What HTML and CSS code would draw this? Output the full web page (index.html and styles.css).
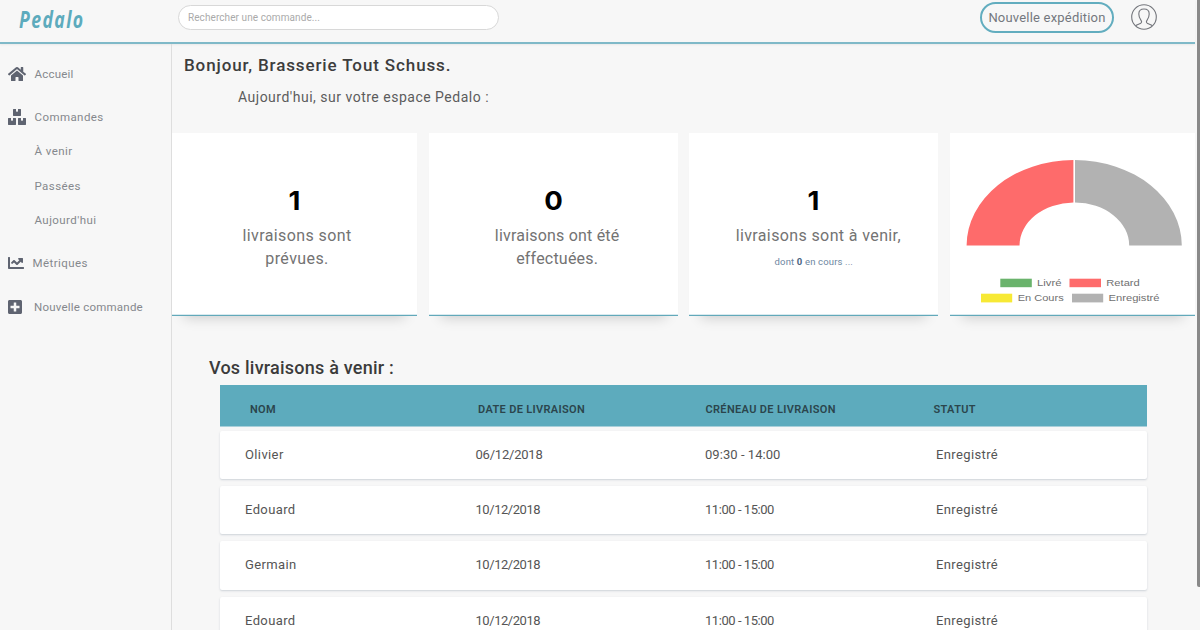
FILE: index.html
```html
<!DOCTYPE html>
<html lang="fr">
<head>
<meta charset="utf-8">
<title>Pedalo</title>
<link rel="stylesheet" href="styles.css">
</head>
<body>
<div class="app">
  <header class="topbar">
    <a class="logo">Pedalo</a>
    <div class="search"><span class="search-text">Rechercher une commande...</span></div>
    <a class="ship-btn"><span class="ship-text">Nouvelle expédition</span></a>
    <svg class="avatar" viewBox="0 0 26 26"><circle cx="13" cy="13" r="12.3"/><path d="M4.6 21.8C5.8 20.6 7.6 20.3 9.4 19.4C11 18.6 10.8 17.6 10 16.4C8.6 14.4 7.8 12.6 7.8 10C7.8 6.6 9.8 5 13 5S18.200 6.600 18.200 10C18.200 12.600 17.400 14.400 16 16.400C15.200 17.600 15 18.600 16.600 19.400C18.400 20.300 20.200 20.600 21.400 21.800"/></svg>
  </header>
  <div class="body">
    <nav class="side">
      <a class="item home"><svg class="ico wide" viewBox="0 0 576 512"><path d="M280.370 148.260L96 300.110V464a16 16 0 0 0 16 16l112.060-.290a16 16 0 0 0 15.920-16V368a16 16 0 0 1 16-16h64a16 16 0 0 1 16 16v95.640a16 16 0 0 0 16 16.050L464 480a16 16 0 0 0 16-16V300L295.670 148.260a12.190 12.190 0 0 0-15.300 0zM571.600 251.470L488 182.560V44.050a12 12 0 0 0-12-12h-56a12 12 0 0 0-12 12v72.610L318.470 43a48 48 0 0 0-61 0L4.340 251.470a12 12 0 0 0-1.600 16.900l25.500 31A12 12 0 0 0 45.150 301l235.220-193.740a12.190 12.190 0 0 1 15.300 0L530.900 301a12 12 0 0 0 16.900-1.600l25.500-31a12 12 0 0 0-1.700-16.930z"/></svg><span>Accueil</span></a>
      <a class="item"><svg class="ico wide" viewBox="0 0 576 512"><path d="M560 288h-80v96l-32-21.300-32 21.300v-96h-80c-8.800 0-16 7.200-16 16v192c0 8.800 7.200 16 16 16h224c8.800 0 16-7.200 16-16V304c0-8.800-7.200-16-16-16zm-384-64h224c8.800 0 16-7.200 16-16V16c0-8.800-7.200-16-16-16h-80v96l-32-21.300L256 96V0h-80c-8.800 0-16 7.200-16 16v192c0 8.800 7.200 16 16 16zm64 64h-80v96l-32-21.300L96 384v-96H16c-8.800 0-16 7.200-16 16v192c0 8.800 7.200 16 16 16h224c8.800 0 16-7.200 16-16V304c0-8.800-7.200-16-16-16z"/></svg><span>Commandes</span></a>
      <div class="subs">
        <a class="item sub">À venir</a>
        <a class="item sub">Passées</a>
        <a class="item sub">Aujourd'hui</a>
      </div>
      <a class="item"><svg class="ico mid" viewBox="0 0 512 512"><path d="M496 384H64V80c0-8.840-7.160-16-16-16H16C7.160 64 0 71.160 0 80v336c0 17.670 14.330 32 32 32h464c8.840 0 16-7.160 16-16v-32c0-8.840-7.160-16-16-16zM464 96H345.940c-21.380 0-32.090 25.850-16.970 40.970l32.400 32.400L288 242.750l-73.370-73.370c-12.500-12.500-32.760-12.500-45.250 0l-68.690 68.690c-6.250 6.250-6.250 16.380 0 22.630l22.620 22.620c6.250 6.250 16.380 6.250 22.630 0L192 237.250l73.370 73.370c12.500 12.500 32.760 12.500 45.250 0l96-96 32.400 32.400c15.120 15.120 40.970 4.410 40.970-16.970V112c.010-8.840-7.150-16-15.990-16z"/></svg><span>Métriques</span></a>
      <a class="item new"><svg class="ico slim" viewBox="0 0 448 512"><path d="M400 32H48C21.500 32 0 53.500 0 80v352c0 26.500 21.500 48 48 48h352c26.500 0 48-21.500 48-48V80c0-26.500-21.500-48-48-48zm-32 252c0 6.600-5.400 12-12 12h-92v92c0 6.600-5.400 12-12 12h-56c-6.600 0-12-5.400-12-12v-92H92c-6.600 0-12-5.400-12-12v-56c0-6.600 5.400-12 12-12h92v-92c0-6.600 5.400-12 12-12h56c6.600 0 12 5.400 12 12v92h92c6.600 0 12 5.400 12 12v56z"/></svg><span>Nouvelle commande</span></a>
    </nav>
    <main class="main">
      <h1 class="hello">Bonjour, Brasserie Tout Schuss.</h1>
      <p class="intro">Aujourd'hui, sur votre espace Pedalo :</p>
      <section class="cards">
        <div class="card"><b class="num">1</b><p class="label">livraisons sont<br>prévues.</p></div>
        <div class="card"><b class="num">0</b><p class="label">livraisons ont été<br>effectuées.</p></div>
        <div class="card"><b class="num">1</b><p class="label">livraisons sont à venir,</p><p class="note">dont <b>0</b> en cours ...</p></div>
        <div class="card">
          <svg class="chart" viewBox="0 0 245 181">
            <path fill="#fe6b6b" d="M16.600 112.500A107.500 85.500 0 0 1 123.400 27V69.500A54.500 43 0 0 0 69.500 112.500Z"/>
            <path fill="#b2b2b2" d="M231.800 112.500A107.500 85.500 0 0 0 125 27V69.500A54.500 43 0 0 1 179.200 112.500Z"/>
            <rect x="50.300" y="145.700" width="31.500" height="8.500" fill="#6ab36c"/>
            <rect x="119.500" y="145.700" width="31.500" height="8.500" fill="#fe6b6b"/>
            <rect x="31" y="160.700" width="31.200" height="8.700" fill="#f7e935"/>
            <rect x="122" y="160.700" width="31.200" height="8.700" fill="#b2b2b2"/>
            <g class="legend">
              <text x="87" y="152.700" textLength="24.500" lengthAdjust="spacingAndGlyphs">Livré</text>
              <text x="156.300" y="152.700" textLength="33.500" lengthAdjust="spacingAndGlyphs">Retard</text>
              <text x="67.700" y="167.700" textLength="46" lengthAdjust="spacingAndGlyphs">En Cours</text>
              <text x="158.500" y="167.700" textLength="51" lengthAdjust="spacingAndGlyphs">Enregistré</text>
            </g>
          </svg>
        </div>
      </section>
      <h2 class="title">Vos livraisons à venir :</h2>
      <section class="table">
        <div class="head"><span>NOM</span><span>DATE DE LIVRAISON</span><span>CRÉNEAU DE LIVRAISON</span><span>STATUT</span></div>
        <div class="row"><span>Olivier</span><span class="date">06/12/2018</span><span class="slot">09:30 - 14:00</span><span>Enregistré</span></div>
        <div class="row"><span>Edouard</span><span class="date narrow">10/12/2018</span><span class="slot early">11:00 - 15:00</span><span>Enregistré</span></div>
        <div class="row"><span>Germain</span><span class="date narrow">10/12/2018</span><span class="slot early">11:00 - 15:00</span><span>Enregistré</span></div>
        <div class="row"><span>Edouard</span><span class="date narrow">10/12/2018</span><span class="slot early">11:00 - 15:00</span><span>Enregistré</span></div>
      </section>
    </main>
  </div>
  <div class="scroll-thumb"></div>
</div>
</body>
</html>
```
FILE: styles.css
```css
* { box-sizing: border-box; }
body { margin: 0; background: #f7f7f7; font-family: Roboto, "Liberation Sans", sans-serif; overflow: hidden; }
h1, h2, p { margin: 0; }
.app { position: relative; width: 1200px; height: 630px; padding-right: 5px; overflow: hidden; }
.scroll-thumb { position: absolute; top: 0; right: 0; width: 3px; height: 587px; background: #898989; border-radius: 0 0 0 2px; }

.topbar { display: flex; height: 44px; border-bottom: 2px solid #7fb9c8; box-shadow: 0 1px 2px rgba(0,0,0,.06); }
.logo { width: 178px; padding-left: 19px; font: italic 700 23.500px/38px "Open Sans", sans-serif; letter-spacing: 1.900px; color: #5dabbd; transform: scaleX(.75); transform-origin: 19px 0; }
.search { width: 321px; height: 25px; margin-top: 5px; padding-left: 9px; border: 1px solid #d8d8d8; border-radius: 13px; background: #fff; font-size: 10px; line-height: 24px; letter-spacing: .08px; color: #aaa; }
.ship-btn { width: 134px; height: 31px; margin: 2px 0 0 481px; border: 2px solid #62adbf; border-radius: 16px; font-size: 13px; line-height: 28px; letter-spacing: .2px; text-align: center; color: #74777e; white-space: nowrap; }
.avatar { width: 26px; height: 26px; margin: 4px 0 0 17px; fill: none; stroke: #74767c; stroke-width: 1.1; }

.body { display: flex; height: 586px; }
.side { width: 172px; padding: 8px 0 0 8px; border-right: 1px solid #dedede; }
.item { display: flex; align-items: center; height: 43.300px; gap: 8.500px; font-size: 11.500px; letter-spacing: .43px; color: #85888d; white-space: nowrap; }
.home { letter-spacing: .2px; }
.subs { height: 103px; margin-top: -4.500px; margin-bottom: 4.500px; }
.sub { height: 34.300px; padding-left: 26.500px; }
.ico { height: 16px; fill: #5f6471; flex: none; }
.wide { width: 18px; }
.mid { width: 16px; }
.slim { width: 14px; }
.new { gap: 12px; letter-spacing: .22px; }

.main { width: 1023px; }
.hello { padding: 9px 0 0 12px; font-size: 17px; font-weight: 500; line-height: 24px; letter-spacing: .88px; color: #3d3d3d; }
.intro { padding: 9px 0 0 66px; font-size: 14px; line-height: 22px; letter-spacing: .5px; color: #5c5c5c; }
.cards { display: grid; grid-template-columns: 245px 249px 249px 245px; justify-content: space-between; margin-top: 25px; }
.card { height: 183px; padding-top: 51px; background: linear-gradient(#fff 181px, #d9eaef 181px); border-bottom: 1px solid #62a9ba; box-shadow: 0 14px 12px -12px rgba(0,0,0,.17); text-align: center; }
.card:last-child { padding: 0; }
.num { display: block; font: 700 26px/34px Inter, sans-serif; color: #000; transform: scaleX(1.06); }
.label { padding: 6px 0 0 5px; font-size: 16px; line-height: 23px; letter-spacing: .4px; color: #737373; }
.card:nth-child(2) .label { padding-left: 8px; letter-spacing: .2px; }
.card:nth-child(3) .label { padding-left: 9px; letter-spacing: .38px; }
.note { padding-top: 6px; font-size: 9.500px; line-height: 17px; letter-spacing: .15px; color: #6d86a1; }
.note b { color: #4a6482; }
.chart { display: block; width: 245px; height: 181px; }
.legend { font: 9.300px "Liberation Sans", sans-serif; fill: #707070; }

.title { padding: 39px 0 0 37px; font-size: 18px; font-weight: 500; line-height: 26px; letter-spacing: .22px; color: #3b3b3b; }
.table { width: 927px; margin: 4px 0 0 48px; }
.head { display: grid; grid-template-columns: 228px 227.500px 228px 1fr; height: 42px; padding: 8px 0 0 30px; background: #5dabbd; border-bottom: 1px solid #a9d0da; font-size: 11px; font-weight: 600; line-height: 34px; letter-spacing: .34px; color: #2b454c; }
.row { display: grid; grid-template-columns: 230.500px 229.500px 231px 1fr; height: 48.400px; margin-top: 7px; padding-left: 25px; background: #fff; border-radius: 2px; box-shadow: 0 1px 2px rgba(60,80,110,.22); font-size: 13px; line-height: 47.500px; letter-spacing: .38px; color: #555; }
.head + .row { margin-top: 3.500px; }
.date { letter-spacing: -.22px; }
.narrow { letter-spacing: -.45px; }
.slot { letter-spacing: .05px; }
.early { letter-spacing: -.45px; }
```
